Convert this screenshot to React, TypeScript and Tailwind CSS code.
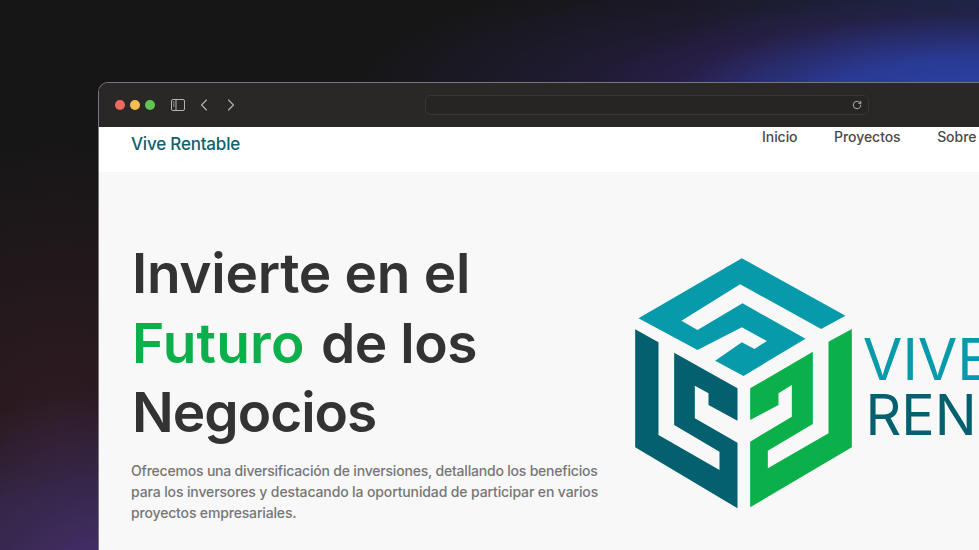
import { ChevronLeft, ChevronRight, RotateCw } from 'lucide-react';

const navLinks = ['Inicio', 'Proyectos', 'Sobre Nosotros'];

function SidebarIcon() {
  return (
    <svg viewBox="0 0 14 12" className="w-[14px] h-[12px] text-[#b5b3b1]" fill="none" stroke="currentColor" strokeWidth="1">
      <rect x="0.5" y="0.5" width="13" height="11" rx="1.5" />
      <path d="M5 0.5v11" />
      <path d="M2 3h1.5M2 5h1.5M2 7h1.5" />
    </svg>
  );
}

function Logo() {
  return (
    <svg viewBox="0 0 1400 810" className="w-[467px] h-[270px] flex-shrink-0" fontFamily="Inter, sans-serif">
      <path
        fill="#069aab"
        d="M365 25L676 197L603 237L360 103L184 212L232 240L367 160L556 266L370 378L285 332L365 277L403 297L440 273L365 232L232 300L55 205Z"
      />
      <path
        fill="#04606f"
        d="M45 238L115 277V555L298 660V605L162 525V308L352 415V512L265 465V430L224 407V505L352 578V775L45 592Z"
      />
      <path
        fill="#0bb04a"
        d="M695 237V592L390 772V575L515 500V405L475 430V465L390 510V415L578 305V522L443 602V655L625 550V275Z"
      />
      <text x="728" y="390" fontSize="172" fontWeight="400" fill="#069aab">VIVE</text>
      <text x="736" y="556" fontSize="167" fontWeight="400" fill="#04606f">RENTABLE</text>
    </svg>
  );
}

export default function App() {
  return (
    <div className="h-[550px] w-[979px] overflow-hidden bg-[#161616] bg-[radial-gradient(ellipse_390px_115px_at_979px_105px,#2c44a8_0%,#2a3a94_40%,#2a204f80_80%,transparent_100%),radial-gradient(ellipse_450px_130px_at_800px_95px,#2a2050_0%,transparent_100%),radial-gradient(ellipse_300px_120px_at_979px_0px,#14283f_0%,transparent_100%),radial-gradient(ellipse_230px_210px_at_105px_600px,#4a3278_0%,#38284f_50%,transparent_100%),radial-gradient(ellipse_120px_100px_at_0px_570px,#2f3352_0%,transparent_100%),radial-gradient(ellipse_280px_300px_at_60px_430px,#2f1b22_0%,transparent_100%)] pt-[82px] pl-[98px] font-['Inter',sans-serif]">
      <div className="w-[1000px] rounded-t-[10px] border-l border-t border-[#77777c] overflow-hidden">
        <div className="h-[44px] bg-[#2a2827] flex items-center pl-[16px] pb-[1px]">
          <div className="flex gap-[5px]">
            <span className="w-[10px] h-[10px] rounded-full bg-[#ec6a5e]" />
            <span className="w-[10px] h-[10px] rounded-full bg-[#f4bf4f]" />
            <span className="w-[10px] h-[10px] rounded-full bg-[#61c554]" />
          </div>
          <div className="ml-[16px]"><SidebarIcon /></div>
          <ChevronLeft strokeWidth={1.3} className="ml-[9px] w-[20px] h-[20px] text-[#b5b3b1]" />
          <ChevronRight strokeWidth={1.3} className="ml-[7px] w-[20px] h-[20px] text-[#b5b3b1]" />
          <div className="ml-[184px] w-[444px] h-[20px] rounded-[6px] border border-[#383635] bg-[#272524] flex items-center justify-end pr-[6px]">
            <RotateCw className="w-[10px] h-[10px] text-[#c8c6c4]" />
          </div>
        </div>

        <nav className="h-[45px] bg-white flex items-start pl-[32px]">
          <a className="mt-[8px] text-[17px] font-medium leading-[18px] tracking-[-0.2px] text-[#0f5f70]">Vive Rentable</a>
          <div className="ml-[522px] flex gap-[36.5px] whitespace-nowrap pt-[2px]">
            {navLinks.map(link => (
              <a key={link} className="text-[14px] font-medium leading-[16px] tracking-[-0.05px] text-[#4a4a4a]">{link}</a>
            ))}
          </div>
        </nav>

        <section className="h-[400px] bg-[#f8f8f8] flex pl-[33px] pt-[67px]">
          <div className="w-[488px] flex-shrink-0">
            <h1 className="text-[55px] font-semibold leading-[69.5px] text-[#333333] whitespace-nowrap">
              <span className="block tracking-[-0.3px]">Invierte en el</span>
              <span className="block tracking-[-0.45px]"><span className="mr-[3px] tracking-[0.2px] text-[#0bb04a]">Futuro</span> de los</span>
              <span className="block tracking-[-1px]">Negocios</span>
            </h1>
            <p className="mt-[12px] -ml-[1px] text-[14px] font-medium leading-[21px] text-[#767676] whitespace-nowrap">
              <span className="block tracking-[-0.2px]">Ofrecemos una diversificación de inversiones, detallando los beneficios</span>
              <span className="block tracking-[-0.125px]">para los inversores y destacando la oportunidad de participar en varios</span>
              <span className="block tracking-[-0.16px]">proyectos empresariales.</span>
            </p>
          </div>
          <div className="pt-[11px]">
            <Logo />
          </div>
        </section>
      </div>
    </div>
  );
}
